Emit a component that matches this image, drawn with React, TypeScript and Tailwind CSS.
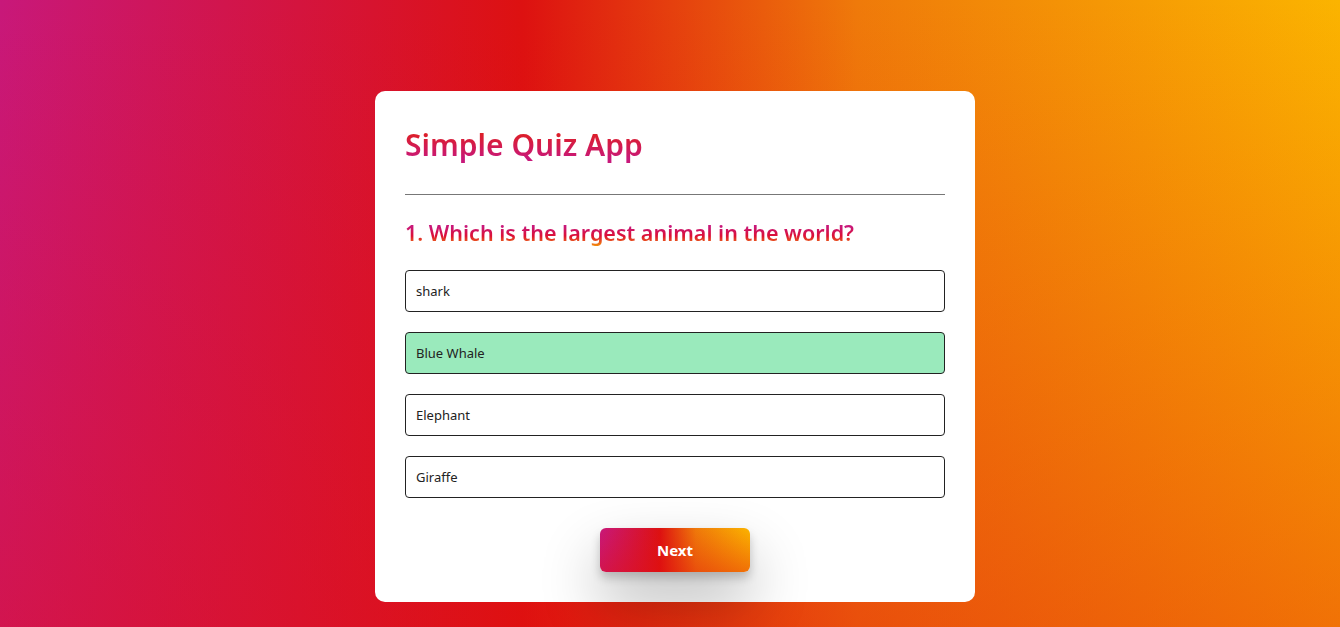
const answers = [
  { text: "shark", correct: false },
  { text: "Blue Whale", correct: true },
  { text: "Elephant", correct: false },
  { text: "Giraffe", correct: false },
];

export default function App() {
  return (
    <div className="h-screen overflow-hidden bg-[linear-gradient(180deg,rgba(225,15,15,0)_0%,rgba(225,15,15,0.4)_100%),linear-gradient(90deg,#c8187a_0%,#dd1111_39%,#ef7a0a_64%,#fbb400_100%)] pt-[91px] pl-[10px] font-['Noto_Sans',sans-serif]">
      <div className="mx-auto w-[600px] rounded-[10px] bg-white p-[30px]">
        <h1 className="border-b border-[#777] pt-[1px] pb-[27px] text-[30px] leading-[45px] font-semibold">
          <span className="bg-[linear-gradient(180deg,#e0201c_15%,#c8187a_85%)] bg-clip-text text-transparent">
            Simple Quiz App
          </span>
        </h1>
        <div className="pt-[23px]">
          <h2 className="text-[21.5px] leading-[30px] font-semibold">
            <span className="bg-[linear-gradient(180deg,#c8187a_30%,#dc1035_62%,#f59a05_100%)] bg-clip-text text-transparent">
              1. Which is the largest animal in the world?
            </span>
          </h2>
          <div className="mt-[22px] flex flex-col gap-[20px]">
            {answers.map((a) => (
              <button
                key={a.text}
                className={`h-[42px] w-full rounded-[4px] border border-[#222] px-[10px] pt-[1px] text-left text-[13px] text-[#222] ${
                  a.correct ? "bg-[#9aeabc]" : "bg-white"
                }`}
              >
                {a.text}
              </button>
            ))}
          </div>
          <div className="mt-[30px] flex justify-center">
            <button className="h-[44px] w-[150px] rounded-[6px] bg-[linear-gradient(180deg,rgba(225,15,15,0)_0%,rgba(225,15,15,0.4)_100%),linear-gradient(90deg,#c8187a_0%,#dd1111_40%,#ef7a0a_64%,#fbb400_100%)] text-[15px] font-bold text-white shadow-[0_6px_10px_rgba(0,0,0,0.2),0_30px_60px_rgba(0,0,0,0.3)]">
              Next
            </button>
          </div>
        </div>
      </div>
    </div>
  );
}
